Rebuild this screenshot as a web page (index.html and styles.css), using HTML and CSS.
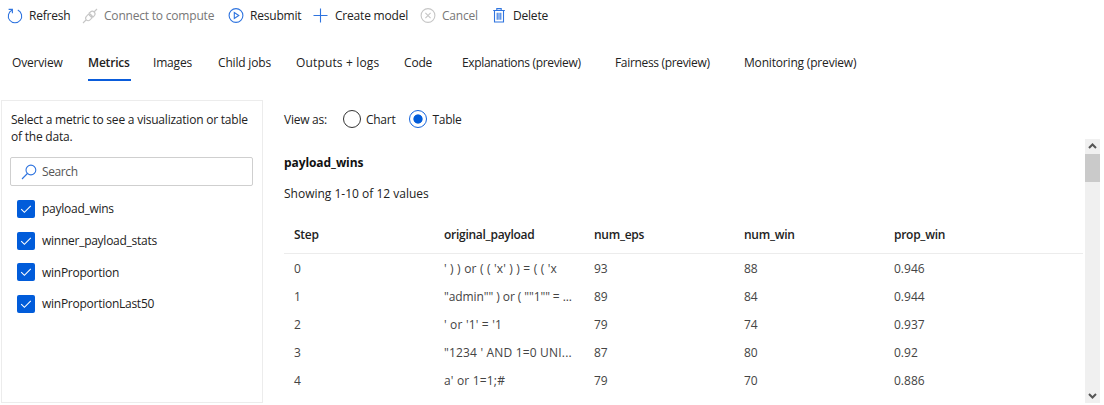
FILE: index.html
```html
<!DOCTYPE html>
<html lang="en">
<head>
<meta charset="utf-8">
<title>Job metrics</title>
<link rel="stylesheet" href="styles.css">
</head>
<body>
<div class="toolbar">
  <button class="command"><svg class="icon" viewBox="0 0 16 16"><path d="M5.2 2A6.7 6.7 0 1 0 10.8 2M1.6 1.4H5.4V5.2"/></svg><span>Refresh</span></button>
  <button class="command disabled"><svg class="icon" viewBox="0 0 16 16"><path d="M1 15l3-3M12 4l3-3M6.5 6.2L4.4 8.3a2.6 2.6 0 0 0 0 3.6 2.6 2.6 0 0 0 3.6 0l2.1-2.1zM7.2 5l3.9 3.9 1.1-1.1a2.7 2.7 0 0 0 0-3.8 2.7 2.7 0 0 0-3.8 0zM7.1 7.8l1.6-1.6M8.5 9.2l1.6-1.6"/></svg><span>Connect to compute</span></button>
  <button class="command"><svg class="icon" viewBox="0 0 16 16"><circle cx="8" cy="7.5" r="6.9"/><path d="M6.3 4.5v6L10.8 7.5z"/></svg><span>Resubmit</span></button>
  <button class="command"><svg class="icon" viewBox="0 0 16 16"><path d="M7.5 .5v14M.5 7.5h14"/></svg><span>Create model</span></button>
  <button class="command disabled"><svg class="icon" viewBox="0 0 16 16"><circle cx="8" cy="7.5" r="6.9"/><path d="M5.4 4.9l5.2 5.2M10.6 4.9l-5.2 5.2"/></svg><span>Cancel</span></button>
  <button class="command"><svg class="icon trash" viewBox="0 0 16 16"><path d="M1.2 2.5h11.6M4.8 2.3V.6h4.4v1.7M2.5 2.7v11.3h9V2.7M5.2 4.8v7M7 4.8v7M8.8 4.8v7"/></svg><span>Delete</span></button>
</div>
<nav class="tabs">
  <a><span>Overview</span></a>
  <a class="selected"><span>Metrics</span></a>
  <a><span>Images</span></a>
  <a><span>Child jobs</span></a>
  <a class="wide"><span>Outputs + logs</span></a>
  <a><span>Code</span></a>
  <a class="tight"><span>Explanations (preview)</span></a>
  <a class="tight"><span>Fairness (preview)</span></a>
  <a><span>Monitoring (preview)</span></a>
</nav>
<main class="content">
  <aside class="panel">
    <p class="hint">Select a metric to see a visualization or table of the data.</p>
    <div class="search"><svg class="icon" viewBox="0 0 16 16"><circle cx="9.9" cy="6" r="4.9"/><path d="M6.4 9.5L1 15"/></svg><span>Search</span></div>
    <div class="metrics">
      <div class="metric"><i class="check"><svg viewBox="0 0 18 18"><path d="M4.2 9.1l3.2 3.2 6.4-6.5"/></svg></i><span>payload_wins</span></div>
      <div class="metric"><i class="check"><svg viewBox="0 0 18 18"><path d="M4.2 9.1l3.2 3.2 6.4-6.5"/></svg></i><span>winner_payload_stats</span></div>
      <div class="metric"><i class="check"><svg viewBox="0 0 18 18"><path d="M4.2 9.1l3.2 3.2 6.4-6.5"/></svg></i><span>winProportion</span></div>
      <div class="metric"><i class="check"><svg viewBox="0 0 18 18"><path d="M4.2 9.1l3.2 3.2 6.4-6.5"/></svg></i><span>winProportionLast50</span></div>
    </div>
  </aside>
  <section class="results">
    <div class="view-as"><span>View as:</span><i class="radio"></i><span>Chart</span><i class="radio on"></i><span>Table</span></div>
    <div class="scroller">
      <div class="view">
        <h2>payload_wins</h2>
        <p class="count">Showing 1-10 of 12 values</p>
        <div class="row head"><span>Step</span><span>original_payload</span><span>num_eps</span><span>num_win</span><span>prop_win</span></div>
        <div class="row"><span>0</span><span class="payload-a">' ) ) or ( ( 'x' ) ) = ( ( 'x</span><span>93</span><span>88</span><span>0.946</span></div>
        <div class="row"><span>1</span><span class="payload-b">"admin"" ) or ( ""1"" = ...</span><span>89</span><span>84</span><span>0.944</span></div>
        <div class="row"><span>2</span><span class="payload-a">' or '1' = '1</span><span>79</span><span>74</span><span>0.937</span></div>
        <div class="row"><span>3</span><span class="payload-a">"1234 ' AND 1=0 UNI...</span><span>87</span><span>80</span><span>0.92</span></div>
        <div class="row"><span>4</span><span class="payload-a">a' or 1=1;#</span><span>79</span><span>70</span><span>0.886</span></div>
      </div>
      <div class="scrollbar">
        <svg viewBox="0 0 15 15"><path d="M4 9l3.5-3.5L11 9"/></svg>
        <div class="thumb"></div>
        <svg class="down" viewBox="0 0 15 15"><path d="M4 6l3.5 3.5L11 6"/></svg>
      </div>
    </div>
  </section>
</main>
</body>
</html>
```
FILE: styles.css
```css
* { box-sizing: border-box; }
body {
  margin: 0;
  height: 405px;
  overflow: hidden;
  background: #fff;
  color: #222;
  font: 12px/17px "Open Sans", "Noto Sans", sans-serif;
  white-space: nowrap;
}
p, h2 { margin: 0; }
svg { fill: none; display: block; }

.toolbar {
  display: grid;
  grid-template-columns: 75px 146px 85px 107px 72px 80px;
  height: 31px;
  padding-left: 7px;
}
.command {
  display: flex;
  align-items: center;
  gap: 6px;
  padding: 0;
  border: 0;
  background: none;
  color: inherit;
  font: inherit;
  letter-spacing: -0.2px;
}
.icon { width: 16px; height: 16px; flex: none; stroke: #2f74df; stroke-width: 1.1; }
.trash { margin-right: -1px; }
.disabled { color: #777; }
.disabled .icon { stroke: #c6c6c6; }

.tabs {
  display: grid;
  grid-template-columns: 76px 65px 65px 78px 108px 58px 153px 129px 120px;
  height: 69px;
  padding: 13px 0 19px 12px;
  letter-spacing: -0.18px;
}
.tabs a { display: flex; align-items: center; }
.tabs .wide { letter-spacing: 0.15px; }
.tabs .tight { letter-spacing: -0.33px; }
.tabs .selected {
  justify-self: start;
  width: 43px;
  padding-top: 2px;
  border-bottom: 2px solid #0a5cdb;
  font-weight: 600;
}

.content { display: flex; height: 303px; padding-left: 1px; }
.panel { width: 262px; border: 1px solid #ececec; padding: 10px 9px; }
.hint { white-space: normal; margin-right: -6px; letter-spacing: -0.22px; }
.search {
  display: flex;
  align-items: center;
  gap: 5px;
  height: 29px;
  margin: 12px 0 0 -1px;
  padding-left: 10px;
  border: 1px solid #cfcfcf;
  border-radius: 2px;
  color: #555;
  letter-spacing: -0.4px;
}
.metrics { padding: 7px 0 0 6px; letter-spacing: -0.26px; }
.metric { display: flex; align-items: center; gap: 7px; height: 31.7px; }
.check { width: 18px; height: 18px; border-radius: 2px; background: #015cda; }
.check svg { stroke: #fff; stroke-width: 1.1; }

.results { flex: 1; padding-left: 21px; }
.view-as { display: flex; align-items: center; height: 39px; letter-spacing: -0.25px; }
.radio {
  width: 18px;
  height: 18px;
  margin: -1px 5px 0 16px;
  border: 1px solid #333;
  border-radius: 50%;
}
.radio.on {
  margin-left: 14px;
  border-color: #1464dc;
  background: radial-gradient(circle, #015cda 4.2px, transparent 5px);
}
.scroller { display: flex; justify-content: space-between; height: 264px; }
.view { width: 799px; padding-top: 16px; }
h2 { font-size: 12px; line-height: 16px; font-weight: 700; color: #111; letter-spacing: -0.08px; }
.count { margin-top: 14px; }
.row {
  display: grid;
  grid-template-columns: repeat(5, 150px);
  align-items: center;
  height: 28.2px;
  padding-left: 10px;
  color: #444;
}
.row.head {
  height: 38px;
  margin: 14px 0 0;
  border-bottom: 1px solid #ececec;
  color: #222;
  font-weight: 600;
  letter-spacing: -0.27px;
}
.payload-a { letter-spacing: 0.18px; }
.payload-b { letter-spacing: -0.08px; }
.scrollbar { width: 15px; margin-right: 4px; background: #f0f0f0; display: flex; flex-direction: column; }
.scrollbar svg { width: 15px; height: 15px; stroke: #555; stroke-width: 2; }
.thumb { height: 28px; background: #cacaca; }
.down { margin-top: auto; }
```
